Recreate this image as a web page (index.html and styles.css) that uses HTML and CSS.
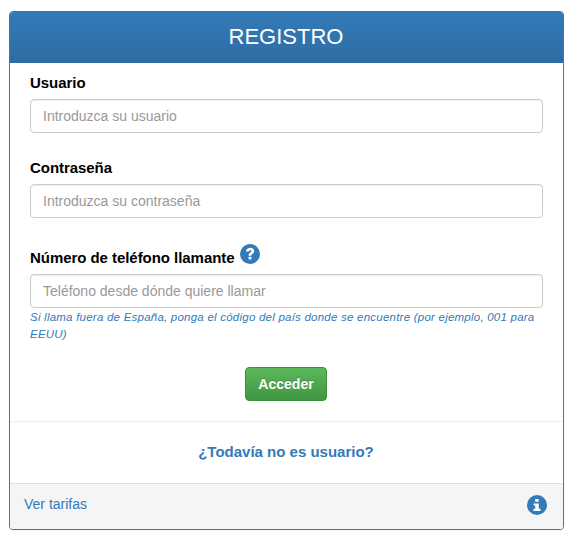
FILE: index.html
```html
<!DOCTYPE html>
<html lang="es">
<head>
<meta charset="utf-8">
<title>Registro</title>
<link rel="stylesheet" href="styles.css">
</head>
<body>
<div class="panel">
  <div class="panel-heading">REGISTRO</div>
  <form class="panel-body">
    <div class="group">
      <label class="label">Usuario</label>
      <input class="input" type="text" placeholder="Introduzca su usuario">
    </div>
    <div class="group">
      <label class="label">Contraseña</label>
      <input class="input" type="password" placeholder="Introduzca su contraseña">
    </div>
    <div class="group group-phone">
      <label class="label label-icon">Número de teléfono llamante
        <svg class="icon" viewBox="0 0 20 20" width="20" height="20"><circle cx="10" cy="10" r="10" fill="#337ab7"/><path fill="#fff" d="M6 7.500C6.300 5 8 3.800 10.200 3.800c2.300 0 4 1.300 4 3.300 0 1.500-.8 2.300-1.900 3-.8.500-1 .9-1 1.600H8.600c0-1.600.4-2.300 1.500-3 .8-.5 1.200-.9 1.200-1.500s-.5-1-1.200-1c-.8 0-1.300.5-1.500 1.500z"/><rect x="8.600" y="12.800" width="2.800" height="2.700" rx=".4" fill="#fff"/></svg>
      </label>
      <input class="input" type="text" placeholder="Teléfono desde dónde quiere llamar">
      <p class="help">Si llama fuera de España, ponga el código del país donde se encuentre (por ejemplo, 001 para EEUU)</p>
    </div>
    <div class="actions"><button class="btn" type="button">Acceder</button></div>
  </form>
  <div class="signup"><a class="signup-link" href="#">¿Todavía no es usuario?</a></div>
  <div class="panel-footer">
    <a class="footer-link" href="#">Ver tarifas</a>
    <svg class="icon" viewBox="0 0 20 20" width="20" height="20"><circle cx="10" cy="10" r="10" fill="#337ab7"/><path fill="#fff" d="M8.200 4h3.400v2.800H8.200zM6.600 8.400h5.200v5.400h1.700V16H6.500v-2.200h1.800v-3.200H6.600z"/></svg>
  </div>
</div>
</body>
</html>
```
FILE: styles.css
```css
* { box-sizing: border-box; }
html, body { margin: 0; padding: 0; background: #fff; }
body {
  padding: 11px 11px 7px 9px;
  font-family: "Liberation Sans", Arial, sans-serif;
  font-size: 14px;
  color: #000;
}
.panel {
  border: 1px solid #337ab7;
  border-radius: 4px;
  overflow: hidden;
  box-shadow: 0 1px 1px rgba(0,0,0,.05);
}
.panel-heading {
  height: 51px;
  padding-right: 1px;
  background: linear-gradient(to bottom, #337ab7, #2e6da4);
  color: #fff;
  font-size: 22px;
  line-height: 50px;
  text-align: center;
}
.panel-body {
  display: block;
  padding: 10px 20px 0;
  height: 358px;
}
.group { margin-bottom: 25px; }
.label {
  display: block;
  height: 26px;
  font-size: 15px;
  font-weight: 700;
  line-height: 19px;
  letter-spacing: -.05px;
}
.group-phone { margin-bottom: 24px; }
.label-icon {
  display: flex;
  align-items: flex-start;
  gap: 5px;
  height: 31px;
  padding-top: 5px;
}
.group-phone .icon { margin-top: -4px; }
.input {
  display: block;
  width: 100%;
  height: 34px;
  padding: 6px 12px;
  border: 1px solid #ccc;
  border-radius: 4px;
  background: #fff;
  box-shadow: inset 0 1px 1px rgba(0,0,0,.075);
  font: 14px/20px "Liberation Sans", Arial, sans-serif;
  color: #555;
}
.input::placeholder { color: #999; opacity: 1; }
.help {
  margin: 1px 0 0;
  font-size: 11.5px;
  font-style: italic;
  line-height: 17px;
  letter-spacing: .23px;
  color: #337ab7;
}
.actions {
  display: flex;
  justify-content: center;
  padding-right: 1px;
}
.btn {
  width: 82px;
  height: 34px;
  border: 1px solid #3e8f3e;
  border-radius: 4px;
  background: linear-gradient(to bottom, #5cb85c, #419641);
  color: #fff;
  font: 700 14px/20px "Liberation Sans", Arial, sans-serif;
  text-shadow: 0 -1px 0 rgba(0,0,0,.2);
}
.signup {
  height: 62px;
  padding-right: 1px;
  border-top: 1px solid #eee;
  text-align: center;
  line-height: 60px;
}
.signup-link {
  color: #337ab7;
  font-size: 15px;
  font-weight: 700;
  text-decoration: none;
}
.panel-footer {
  display: flex;
  justify-content: space-between;
  align-items: center;
  height: 46px;
  padding: 0 16px 4px 14px;
  border-top: 1px solid #ddd;
  background: #f5f5f5;
}
.footer-link { margin-bottom: 2px; color: #337ab7; font-size: 14px; text-decoration: none; }
```
